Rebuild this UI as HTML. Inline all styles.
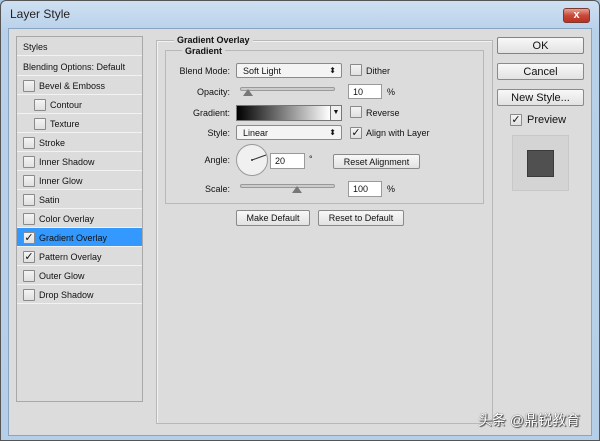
<!DOCTYPE html><html><head><style>
*{box-sizing:border-box;margin:0;padding:0}
body{width:600px;height:441px;overflow:hidden;background:#a9c6e4;font-family:"Liberation Sans",Tahoma,sans-serif;font-size:9px;color:#111;position:relative}
.a{position:absolute}
.win{left:0;top:0;width:600px;height:441px;background:linear-gradient(#cfe0f2,#b8d1ea 30px,#b5cfe9);border:1px solid #555;border-radius:6px 6px 0 0}
.client{left:8px;top:28px;width:584px;height:408px;background:#dcdcdc;border:1px solid #8aa5c2}
.cb{width:12px;height:12px;border:1px solid #8a8a8a;background:linear-gradient(#f4f4f4,#e0e0e0);border-radius:1px}
.row{left:17px;width:125px;height:19px;border-bottom:1px solid #f2f2f2;padding-left:22px;line-height:20px}
.btn{border:1px solid #8a8a8a;border-radius:2px;background:linear-gradient(#f8f8f8,#e2e2e2);text-align:center}
.inp{background:#fff;border:1px solid #9a9a9a;padding-left:4px;line-height:14px}
.lbl{text-align:right;width:80px}
.chk{font-size:11px;line-height:10px;font-weight:bold;text-align:center;font-family:"DejaVu Sans",sans-serif}
</style></head><body>
<div class="a win"></div>
<div class="a" style="left:10px;top:7px;font-size:12px;color:#222;font-family:'Liberation Sans',sans-serif">Layer Style</div>
<div class="a" style="left:563px;top:8px;width:27px;height:15px;border-radius:3px;background:linear-gradient(#e8a093,#c8493a 50%,#b83222);border:1px solid #7a3a30;color:#fff;font-size:11px;text-align:center;line-height:13px;font-weight:bold">x</div>
<div class="a client"></div>
<div class="a" style="left:16px;top:36px;width:127px;height:366px;border:1px solid #a8a8a8;background:#dcdcdc"></div>
<div class="a row" style="top:37px;padding-left:6px">Styles</div>
<div class="a row" style="top:57px;padding-left:6px;height:19px">Blending Options: Default</div>
<div class="a row" style="top:76px">Bevel &amp; Emboss</div>
<div class="a row" style="top:95px;padding-left:33px">Contour</div>
<div class="a row" style="top:114px;padding-left:33px">Texture</div>
<div class="a row" style="top:133px">Stroke</div>
<div class="a row" style="top:152px">Inner Shadow</div>
<div class="a row" style="top:171px">Inner Glow</div>
<div class="a row" style="top:190px">Satin</div>
<div class="a row" style="top:209px">Color Overlay</div>
<div class="a row" style="top:228px;background:#3399ff;color:#111">Gradient Overlay</div>
<div class="a row" style="top:247px">Pattern Overlay</div>
<div class="a row" style="top:266px">Outer Glow</div>
<div class="a row" style="top:285px">Drop Shadow</div>
<div class="a cb" style="left:23px;top:80px"></div>
<div class="a cb" style="left:34px;top:99px"></div>
<div class="a cb" style="left:34px;top:118px"></div>
<div class="a cb" style="left:23px;top:137px"></div>
<div class="a cb" style="left:23px;top:156px"></div>
<div class="a cb" style="left:23px;top:175px"></div>
<div class="a cb" style="left:23px;top:194px"></div>
<div class="a cb" style="left:23px;top:213px"></div>
<div class="a cb chk" style="left:23px;top:232px">✓</div>
<div class="a cb chk" style="left:23px;top:251px">✓</div>
<div class="a cb" style="left:23px;top:270px"></div>
<div class="a cb" style="left:23px;top:289px"></div>
<div class="a" style="left:156px;top:40px;width:337px;height:384px;border:1px solid #b8b8b8;box-shadow:1px 1px 0 #f2f2f2 inset"></div>
<div class="a" style="left:174px;top:35px;background:#dcdcdc;padding:0 3px;font-weight:bold">Gradient Overlay</div>
<div class="a" style="left:165px;top:50px;width:319px;height:154px;border:1px solid #b8b8b8"></div>
<div class="a" style="left:182px;top:46px;background:#dcdcdc;padding:0 3px;font-weight:bold">Gradient</div>
<div class="a lbl" style="left:150px;top:66px">Blend Mode:</div>
<div class="a btn" style="left:236px;top:63px;width:106px;height:15px;text-align:left;padding-left:6px;line-height:14px;background:#f4f4f4">Soft Light<span style="position:absolute;right:5px;font-size:8px">⬍</span></div>
<div class="a cb" style="left:350px;top:64px"></div><div class="a" style="left:366px;top:66px">Dither</div>
<div class="a lbl" style="left:150px;top:87px">Opacity:</div>
<div class="a" style="left:240px;top:87px;width:95px;height:4px;border:1px solid #999;border-radius:2px;background:#ccc"></div>
<div class="a" style="left:243px;top:89px;width:0;height:0;border-left:5px solid transparent;border-right:5px solid transparent;border-bottom:7px solid #777"></div>
<div class="a inp" style="left:348px;top:84px;width:34px;height:15px">10</div><div class="a" style="left:387px;top:87px">%</div>
<div class="a lbl" style="left:150px;top:108px">Gradient:</div>
<div class="a" style="left:236px;top:105px;width:95px;height:16px;border:1px solid #777;background:linear-gradient(90deg,#000,#fff)"></div>
<div class="a" style="left:330px;top:105px;width:12px;height:16px;border:1px solid #777;background:#f0f0f0;font-size:7px;text-align:center;line-height:14px">▼</div>
<div class="a cb" style="left:350px;top:106px"></div><div class="a" style="left:366px;top:108px">Reverse</div>
<div class="a lbl" style="left:150px;top:128px">Style:</div>
<div class="a btn" style="left:236px;top:125px;width:106px;height:15px;text-align:left;padding-left:6px;line-height:14px;background:#f4f4f4">Linear<span style="position:absolute;right:5px;font-size:8px">⬍</span></div>
<div class="a cb chk" style="left:350px;top:127px">✓</div><div class="a" style="left:366px;top:128px">Align with Layer</div>
<div class="a lbl" style="left:150px;top:155px">Angle:</div>
<svg class="a" style="left:235px;top:143px" width="34" height="34"><circle cx="17" cy="17" r="15.5" fill="#f0f0f0" stroke="#999"/><line x1="17" y1="17" x2="31" y2="12" stroke="#333"/><circle cx="17" cy="17" r="1" fill="#333"/></svg>
<div class="a inp" style="left:270px;top:153px;width:35px;height:16px">20</div><div class="a" style="left:309px;top:154px">°</div>
<div class="a btn" style="left:333px;top:154px;width:87px;height:15px;line-height:14px">Reset Alignment</div>
<div class="a lbl" style="left:150px;top:184px">Scale:</div>
<div class="a" style="left:240px;top:184px;width:95px;height:4px;border:1px solid #999;border-radius:2px;background:#ccc"></div>
<div class="a" style="left:292px;top:186px;width:0;height:0;border-left:5px solid transparent;border-right:5px solid transparent;border-bottom:7px solid #777"></div>
<div class="a inp" style="left:348px;top:181px;width:34px;height:16px">100</div><div class="a" style="left:387px;top:184px">%</div>
<div class="a btn" style="left:236px;top:210px;width:74px;height:16px;line-height:15px">Make Default</div>
<div class="a btn" style="left:318px;top:210px;width:86px;height:16px;line-height:15px">Reset to Default</div>
<div class="a btn" style="left:497px;top:37px;width:87px;height:17px;line-height:16px;font-size:11px;border-color:#4c8fd6">OK</div>
<div class="a btn" style="left:497px;top:63px;width:87px;height:17px;line-height:16px;font-size:11px">Cancel</div>
<div class="a btn" style="left:497px;top:89px;width:87px;height:17px;line-height:16px;font-size:11px">New Style...</div>
<div class="a cb chk" style="left:510px;top:114px;width:12px;height:12px">✓</div>
<div class="a" style="left:527px;top:114px;font-size:11px">Preview</div>
<div class="a" style="left:512px;top:135px;width:57px;height:56px;border:1px solid #c8c8c8;background:#d4d4d4"></div>
<div class="a" style="left:527px;top:150px;width:27px;height:27px;background:#505050;border:1px solid #3a3a3a"></div>
<div class="a" style="left:478px;top:410px;font-family:'Liberation Sans','Noto Sans CJK SC',sans-serif;font-size:14px;color:#fff;text-shadow:0 0 1px #333,1px 1px 1px #333">头条 @鼎锐教育</div>
</body></html>
